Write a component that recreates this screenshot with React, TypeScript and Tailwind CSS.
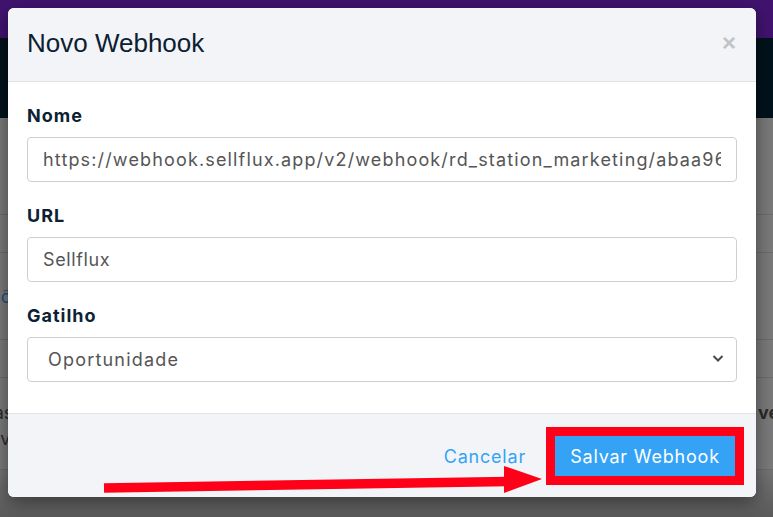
import React from 'react';

const body = "font-['Inter','Noto_Sans',sans-serif]";

function Field({ label, children }: { label: string; children: React.ReactNode }) {
  return (
    <div className="flex flex-col">
      <label className={`${body} h-[24px] mb-[9px] text-[18px] leading-[24px] font-bold tracking-[1px] text-[#0c2233]`}>{label}</label>
      {children}
    </div>
  );
}

export default function App() {
  return (
    <div className="relative w-[773px] h-[517px] overflow-hidden bg-[#777777]">
      {/* dimmed page behind the dialog */}
      <div className="flex flex-col h-full">
        <div className="h-[38px] bg-[#41136f]" />
        <div className="h-[80px] bg-[#02121c]" />
        <div className="flex-1 flex flex-col bg-[#7a7a7a]">
          <div className="h-[97px] border-b border-[#6c6c6c]" />
          <div className="h-[38px] border-b border-[#6c6c6c]" />
          <div className={`${body} h-[87px] border-b border-[#6c6c6c] flex items-center text-[18px] text-[#24507c] overflow-hidden`}>
            <span className="-ml-[22px] whitespace-nowrap">Ações</span>
          </div>
          <div className="h-[38px] border-b border-[#6c6c6c]" />
          <div className={`${body} h-[92px] border-b border-[#6c6c6c] flex pt-[22px] text-[18px] leading-[26px] text-[#2a2a2a] overflow-hidden`}>
            <div className="w-[758px] shrink-0 flex flex-col">
              <span className="-ml-[50px] whitespace-nowrap">Vendas</span>
              <span className="-ml-[22px] whitespace-nowrap">Ativo</span>
            </div>
            <span className="font-bold whitespace-nowrap">verificar</span>
          </div>
          <div className="flex-1 bg-gradient-to-b from-[#747474] to-[#5a5a5a]" />
        </div>
      </div>

      {/* dialog */}
      <div className="absolute inset-0 pt-[8px] pl-[8px]">
        <div className="w-[748px] rounded-[6px] overflow-hidden bg-white shadow-[0_5px_18px_rgba(0,0,0,0.45)]">
          <div className="h-[74px] bg-[#f3f4f8] border-b border-[#e2e3e6] flex items-center justify-between pl-[19px] pr-[20px]">
            <h4 className="font-['Liberation_Sans','Roboto',sans-serif] text-[26px] text-[#0b2030] -mt-[2px]">Novo Webhook</h4>
            <span className="font-['Liberation_Sans',sans-serif] text-[24px] font-bold leading-none text-[#c3c3c3] -mt-[3px]">×</span>
          </div>

          <div className="pt-[22px] pb-[31px] pl-[19px] pr-[19px] flex flex-col gap-[22px]">
            <Field label="Nome">
              <input
                readOnly
                defaultValue="https://webhook.sellflux.app/v2/webhook/rd_station_marketing/abaa96c1f0e2b7d84"
                className={`${body} h-[45px] w-full rounded-[4px] border border-[#cfcfcf] px-[15px] text-[18px] tracking-[1.15px] text-[#555555] outline-none`}
              />
            </Field>
            <Field label="URL">
              <input
                readOnly
                defaultValue="Sellflux"
                className={`${body} h-[45px] w-full rounded-[4px] border border-[#cfcfcf] px-[15px] text-[18px] tracking-[0.6px] text-[#555555] outline-none`}
              />
            </Field>
            <Field label="Gatilho">
              <div className="relative">
                <select
                  defaultValue="op"
                  className={`${body} appearance-none h-[45px] w-full rounded-[4px] border border-[#cfcfcf] pl-[20px] pr-[40px] text-[18px] tracking-[1.2px] text-[#555555] bg-white outline-none`}
                >
                  <option value="op">Oportunidade</option>
                </select>
                <svg className="absolute right-[13px] top-[17px] pointer-events-none" width="12" height="9" viewBox="0 0 12 9">
                  <path d="M1.5 2 L6 6.5 L10.5 2" fill="none" stroke="#4a4a4a" strokeWidth="2" />
                </svg>
              </div>
            </Field>
          </div>

          <div className="h-[84px] bg-[#f3f4f8] border-t border-[#e2e3e6] flex items-center justify-end gap-[20px] pr-[12px] pt-[1px]">
            <button className={`${body} text-[18px] tracking-[0.8px] text-[#35a4f4]`}>Cancelar</button>
            <div className="border-[9px] border-[#ff0019]">
              <button className={`${body} block w-[180px] h-[40px] bg-[#34a3f6] text-white text-[18px] tracking-[0.8px]`}>Salvar Webhook</button>
            </div>
          </div>
        </div>
      </div>

      {/* annotation arrow */}
      <svg className="absolute inset-0 pointer-events-none" width="773" height="517" viewBox="0 0 773 517">
        <line x1="104" y1="488" x2="508" y2="481.5" stroke="#ff0019" strokeWidth="9.5" />
        <polygon points="504,466 542,479 504,493" fill="#ff0019" />
      </svg>
    </div>
  );
}
